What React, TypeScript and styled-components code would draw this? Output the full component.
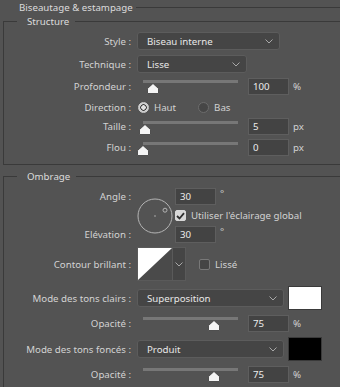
import React from 'react';
import styled, { createGlobalStyle } from 'styled-components';

const GlobalStyle = createGlobalStyle`
  html, body {
    margin: 0;
    overflow: hidden;
    background: #535353;
  }
  body {
    font-family: "Noto Sans", "Liberation Sans", sans-serif;
    font-size: 9.7px;
    color: #d2d2d2;
  }
`;

const TRACK_W = 95;

const Slider: React.FC<{ value: number; max: number; trackTop?: number }> = ({ value, max, trackTop = 2 }) => {
    const left = 6 + (TRACK_W * value) / max - 6;
    return (
        <SliderBox>
            <Track style={{ top: trackTop }} />
            <Thumb width="12" height="11" viewBox="0 0 12 11" style={{ left, top: trackTop + 3 }}>
                <path d="M6 0.5 L11.5 5.5 V10 Q11.5 10.5 11 10.5 H1 Q0.5 10.5 0.5 10 V5.5 Z" fill="#f4f4f4" stroke="#3a3a3a" strokeWidth="0.8" />
            </Thumb>
        </SliderBox>
    );
};

const Chevron: React.FC = () => (
    <svg width="8" height="5" viewBox="0 0 8 5">
        <path d="M0.5 0.5 L4 4 L7.5 0.5" fill="none" stroke="#a8a8a8" strokeWidth="1" />
    </svg>
);

const Select: React.FC<{ label: string; width: number }> = ({ label, width }) => (
    <Dropdown style={{ width }}>
        <span>{label}</span>
        <Chevron />
    </Dropdown>
);

const ValueRow: React.FC<{ label: string; value: string; num: number; max: number; unit: string; mt: number; trackTop?: number }> = ({ label, value, num, max, unit, mt, trackTop }) => (
    <Row $mt={mt} $h={17}>
        <Label>{label}</Label>
        <Controls>
            <Slider value={num} max={max} trackTop={trackTop} />
            <NumInput readOnly value={value} />
            <Unit>{unit}</Unit>
        </Controls>
    </Row>
);

const App: React.FC = () => {
    return (
        <>
            <GlobalStyle />
            <Header>
                <HeaderTitle>Biseautage &amp; estampage</HeaderTitle>
                <HeaderLine />
            </Header>

            <Group>
                <Legend>Structure</Legend>
                <Row $mt={4} $h={18}>
                    <Label>Style :</Label>
                    <Controls>
                        <Select label="Biseau interne" width={143} />
                    </Controls>
                </Row>
                <Row $mt={5} $h={18}>
                    <Label>Technique :</Label>
                    <Controls>
                        <Select label="Lisse" width={110} />
                    </Controls>
                </Row>
                <ValueRow label="Profondeur :" value="100" num={100} max={1000} unit="%" mt={5} />
                <Row $mt={5} $h={14}>
                    <Label>Direction :</Label>
                    <Controls>
                        <Radio $checked />
                        <RadioText>Haut</RadioText>
                        <Radio />
                        <RadioText>Bas</RadioText>
                    </Controls>
                </Row>
                <ValueRow label="Taille :" value="5" num={5} max={250} unit="px" mt={4} trackTop={3} />
                <ValueRow label="Flou :" value="0" num={0} max={50} unit="px" mt={4} trackTop={3} />
            </Group>

            <Group $mt={5}>
                <Legend>Ombrage</Legend>
                <AngleBlock>
                    <AngleLabel $row={1}>Angle :</AngleLabel>
                    <AngleLabel $row={3}>Elévation :</AngleLabel>
                    <Dial width="36" height="36" viewBox="0 0 36 36">
                        <circle cx="18" cy="18" r="17" fill="none" stroke="#b4b4b4" strokeWidth="1" />
                        <circle cx="18" cy="18" r="0.8" fill="#b4b4b4" />
                        <circle cx="28" cy="12.2" r="2" fill="none" stroke="#b4b4b4" strokeWidth="1" />
                    </Dial>
                    <AngleCell $row={1}>
                        <NumInput readOnly value="30" />
                        <Degree>°</Degree>
                    </AngleCell>
                    <AngleCell $row={2}>
                        <Check $checked>
                            <svg width="9" height="8" viewBox="0 0 9 8">
                                <path d="M1 4 L3.5 6.5 L8 1.2" fill="none" stroke="#2e2e2e" strokeWidth="1.8" />
                            </svg>
                        </Check>
                        <CheckText>Utiliser l'éclairage global</CheckText>
                    </AngleCell>
                    <AngleCell $row={3}>
                        <NumInput readOnly value="30" />
                        <Degree>°</Degree>
                    </AngleCell>
                </AngleBlock>

                <Row $mt={4} $h={34}>
                    <Label>Contour brillant :</Label>
                    <Controls>
                        <ContourPicker>
                            <ContourPreview width="34" height="34" viewBox="0 0 34 34" preserveAspectRatio="none">
                                <rect width="34" height="34" fill="#4a4a4a" />
                                <polygon points="0,0 34,0 0,34" fill="#ffffff" />
                            </ContourPreview>
                            <ContourButton>
                                <Chevron />
                            </ContourButton>
                        </ContourPicker>
                        <Check style={{ marginLeft: 13 }} />
                        <CheckText>Lissé</CheckText>
                    </Controls>
                </Row>

                <Row $mt={5} $h={24}>
                    <Label>Mode des tons clairs :</Label>
                    <Controls>
                        <Select label="Superposition" width={147} />
                        <Swatch $color="#ffffff" />
                    </Controls>
                </Row>
                <ValueRow label="Opacité :" value="75" num={75} max={100} unit="%" mt={5} />
                <Row $mt={5} $h={24}>
                    <Label>Mode des tons foncés :</Label>
                    <Controls>
                        <Select label="Produit" width={147} />
                        <Swatch $color="#000000" />
                    </Controls>
                </Row>
                <ValueRow label="Opacité :" value="75" num={75} max={100} unit="%" mt={5} />
            </Group>
        </>
    );
};

const Header = styled.div`
  display: flex;
  align-items: center;
  height: 14px;
  padding: 1px 0 0 19px;
`

const HeaderTitle = styled.span`
  color: #dcdcdc;
  white-space: nowrap;
  line-height: 14px;
`

const HeaderLine = styled.div`
  flex: 1;
  height: 1px;
  margin: 0 0 2px 3px;
  background: #3a3a3a;
`

const Group = styled.fieldset<{ $mt?: number }>`
  box-sizing: border-box;
  margin: ${p => p.$mt ?? 0}px 0 0 3px;
  padding: 0 0 8px 0;
  width: 337px;
  border: 1px solid #3a3a3a;
  border-right: none;
  min-width: 0;
`

const Legend = styled.legend`
  margin-left: 13px;
  padding: 0 6px 0 10px;
  color: #dcdcdc;
  line-height: 13px;
`

const Row = styled.div<{ $mt: number; $h: number }>`
  display: grid;
  grid-template-columns: 127px auto;
  column-gap: 6px;
  align-items: center;
  margin-top: ${p => p.$mt}px;
  height: ${p => p.$h}px;
`

const Label = styled.label`
  text-align: right;
  white-space: nowrap;
`

const Controls = styled.div`
  display: flex;
  align-items: center;
  height: 100%;
`

const Dropdown = styled.div`
  box-sizing: border-box;
  height: 18px;
  display: flex;
  align-items: center;
  justify-content: space-between;
  padding: 0 6px 0 9px;
  background: #454545;
  border: 1px solid #5c5c5c;
  border-radius: 3px;
  color: #e8e8e8;
  white-space: nowrap;
`

const SliderBox = styled.div`
  position: relative;
  width: 111px;
  height: 100%;
  flex: none;
`

const Track = styled.div`
  position: absolute;
  left: 6px;
  width: ${TRACK_W}px;
  height: 3px;
  background: #777777;
`

const Thumb = styled.svg`
  position: absolute;
`

const NumInput = styled.input`
  box-sizing: border-box;
  width: 41px;
  height: 17px;
  padding: 0 0 0 4px;
  margin: 0;
  background: #434343;
  border: 1px solid #5e5e5e;
  color: #ececec;
  font: inherit;
  outline: none;
`

const Unit = styled.span`
  margin-left: 4px;
`

const Radio = styled.span<{ $checked?: boolean }>`
  box-sizing: border-box;
  width: 11px;
  height: 11px;
  border-radius: 50%;
  margin-left: ${p => (p.$checked ? 1 : 0)}px;
  background: ${p => (p.$checked ? 'radial-gradient(circle, #e0e0e0 0 2px, #3c3c3c 2.5px 3px, #cfcfcf 3.5px)' : '#464646')};
  border: 1px solid ${p => (p.$checked ? '#cfcfcf' : '#6c6c6c')};
  flex: none;
`

const RadioText = styled.span`
  margin: 0 22px 0 5px;
`

const AngleBlock = styled.div`
  display: grid;
  grid-template-columns: 127px 36px auto;
  grid-template-rows: 17px 17px 17px;
  row-gap: 2px;
  margin-top: 5px;
`

const AngleLabel = styled.label<{ $row: number }>`
  grid-column: 1;
  grid-row: ${p => p.$row};
  text-align: right;
  align-self: center;
  white-space: nowrap;
`

const Dial = styled.svg`
  grid-column: 2;
  grid-row: 1 / 4;
  align-self: center;
  margin-left: 6px;
`

const AngleCell = styled.div<{ $row: number }>`
  grid-column: 3;
  grid-row: ${p => p.$row};
  display: flex;
  align-items: center;
  margin-left: 8px;
`

const Degree = styled.span`
  align-self: flex-start;
  margin-left: 4px;
  line-height: 12px;
`

const Check = styled.span<{ $checked?: boolean }>`
  box-sizing: border-box;
  width: 11px;
  height: 11px;
  border-radius: 2px;
  display: flex;
  align-items: center;
  justify-content: center;
  background: ${p => (p.$checked ? '#d8d8d8' : '#454545')};
  border: 1px solid ${p => (p.$checked ? '#d8d8d8' : '#787878')};
  flex: none;
`

const CheckText = styled.span`
  margin-left: 5px;
  white-space: nowrap;
`

const ContourPicker = styled.div`
  display: flex;
  height: 34px;
  border: 1px solid #5a5a5a;
  box-sizing: border-box;
`

const ContourPreview = styled.svg`
  display: block;
  width: 34px;
  height: 32px;
`

const ContourButton = styled.div`
  width: 12px;
  display: flex;
  align-items: center;
  justify-content: center;
  background: #454545;
  border-left: 1px solid #5a5a5a;
`

const Swatch = styled.div<{ $color: string }>`
  box-sizing: border-box;
  width: 34px;
  height: 24px;
  margin-left: 4px;
  background: ${p => p.$color};
  border: 1px solid #3a3a3a;
`

export default App;
